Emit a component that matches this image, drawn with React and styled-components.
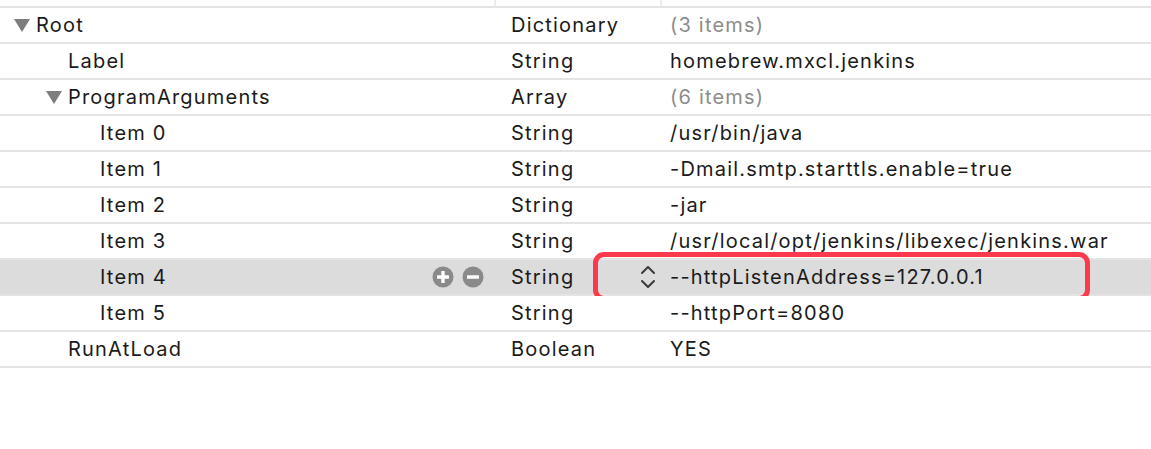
import styled, { createGlobalStyle } from "styled-components";

const GlobalStyle = createGlobalStyle`
  html, body {
    margin: 0;
    padding: 0;
    background: #ffffff;
  }
  body {
    font-family: Inter, "Liberation Sans", sans-serif;
    -webkit-font-smoothing: antialiased;
  }
`;

const Editor = styled.div`
  width: 1151px;
  height: 449px;
  background: #fff;
  overflow: hidden;
`;

const Columns = "496px 166px 1fr";

const HeaderStrip = styled.div`
  display: grid;
  grid-template-columns: ${Columns};
  height: 6px;
  border-bottom: 2px solid #e4e4e4;
`;

const HeaderCell = styled.div`
  border-right: ${(p) => (p.$divider ? "2px solid #ececec" : "none")};
`;

const Row = styled.div`
  position: relative;
  display: grid;
  grid-template-columns: ${Columns};
  height: 34px;
  border-bottom: 2px solid #e4e4e4;
  background: ${(p) => (p.$selected ? "#dcdcdc" : "#fff")};
  font-size: 20px;
  letter-spacing: 1.2px;
  color: #1a1a1a;
`;

const KeyCell = styled.div`
  display: flex;
  align-items: center;
  padding-left: ${(p) => 14 + p.$depth * 32}px;
  padding-right: 12px;
`;

const Disclosure = styled.span`
  display: inline-flex;
  flex: 0 0 22px;
`;

const TypeCell = styled.div`
  display: flex;
  align-items: center;
  justify-content: space-between;
  padding-left: 15px;
  padding-right: 6px;
`;

const ValueCell = styled.div`
  display: flex;
  align-items: center;
  padding-left: 8px;
  color: ${(p) => (p.$muted ? "#8c8c8c" : "#1a1a1a")};
  white-space: nowrap;
`;

const RowButtons = styled.div`
  margin-left: auto;
  display: flex;
  gap: 8px;
`;

const Highlight = styled.div`
  position: absolute;
  left: 593px;
  top: -8px;
  width: 497px;
  height: 49px;
  box-sizing: border-box;
  border: 5px solid #fb3b4d;
  border-radius: 11px;
  pointer-events: none;
`;

const Triangle = () => (
  <svg width="16" height="13" viewBox="0 0 16 13">
    <path d="M0 0 H16 L8 13 Z" fill="#7d7d7d" />
  </svg>
);

const CircleButton = ({ plus }) => (
  <svg width="22" height="22" viewBox="0 0 22 22">
    <circle cx="11" cy="11" r="10.5" fill="#8a8a8a" />
    <rect x="5" y="9.3" width="12" height="3.4" rx="0.5" fill="#fff" />
    {plus && <rect x="9.3" y="5" width="3.4" height="12" rx="0.5" fill="#fff" />}
  </svg>
);

const Stepper = () => (
  <svg width="16" height="26" viewBox="0 0 16 26">
    <path d="M2 9 L8 3 L14 9" fill="none" stroke="#3a3a3a" strokeWidth="2" strokeLinecap="round" strokeLinejoin="round" />
    <path d="M2 17 L8 23 L14 17" fill="none" stroke="#3a3a3a" strokeWidth="2" strokeLinecap="round" strokeLinejoin="round" />
  </svg>
);

const rows = [
  { key: "Root", depth: 0, open: true, type: "Dictionary", value: "(3 items)", muted: true },
  { key: "Label", depth: 1, type: "String", value: "homebrew.mxcl.jenkins" },
  { key: "ProgramArguments", depth: 1, open: true, type: "Array", value: "(6 items)", muted: true },
  { key: "Item 0", depth: 2, type: "String", value: "/usr/bin/java" },
  { key: "Item 1", depth: 2, type: "String", value: "-Dmail.smtp.starttls.enable=true" },
  { key: "Item 2", depth: 2, type: "String", value: "-jar" },
  { key: "Item 3", depth: 2, type: "String", value: "/usr/local/opt/jenkins/libexec/jenkins.war" },
  { key: "Item 4", depth: 2, type: "String", value: "--httpListenAddress=127.0.0.1", selected: true },
  { key: "Item 5", depth: 2, type: "String", value: "--httpPort=8080" },
  { key: "RunAtLoad", depth: 1, type: "Boolean", value: "YES" },
];

export default function App() {
  return (
    <>
      <GlobalStyle />
      <Editor>
        <HeaderStrip>
          <HeaderCell $divider />
          <HeaderCell $divider />
          <HeaderCell />
        </HeaderStrip>
        {rows.map((r) => (
          <Row key={r.key} $selected={r.selected}>
            <KeyCell $depth={r.depth}>
              <Disclosure>{r.open && <Triangle />}</Disclosure>
              {r.key}
              {r.selected && (
                <RowButtons>
                  <CircleButton plus />
                  <CircleButton />
                </RowButtons>
              )}
            </KeyCell>
            <TypeCell>
              {r.type}
              {r.selected && <Stepper />}
            </TypeCell>
            <ValueCell $muted={r.muted}>{r.value}</ValueCell>
            {r.selected && <Highlight />}
          </Row>
        ))}
      </Editor>
    </>
  );
}
